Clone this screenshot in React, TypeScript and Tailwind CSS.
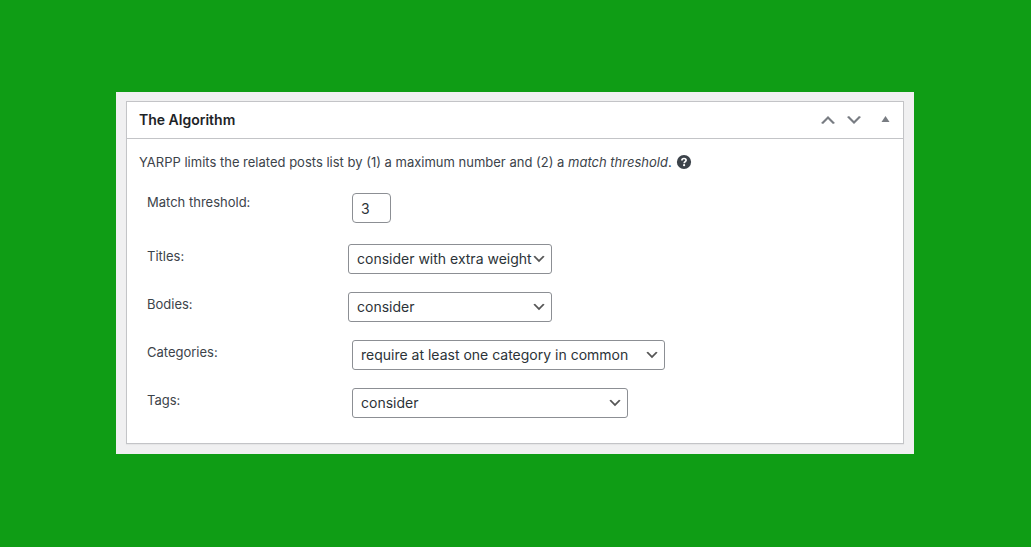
import { useState } from "react";
import type { ReactNode } from "react";

type RowProps = {
  id: string;
  label: string;
  tall?: boolean;
  inset?: boolean;
  children: ReactNode;
};

function Row({ id, label, tall, inset, children }: RowProps) {
  return (
    <div className={`flex items-start ${tall ? "pb-[21px]" : "pb-[18px]"}`}>
      <label
        htmlFor={id}
        className={`shrink-0 ${tall ? "" : "pt-[3px]"} ${inset ? "w-[205px]" : "w-[201px]"} leading-[18px]`}
      >
        {label}
      </label>
      {children}
    </div>
  );
}

type SelectProps = { id: string; width: string; options: string[] };

function Select({ id, width, options }: SelectProps) {
  return (
    <div className={`relative ${width}`}>
      <select
        id={id}
        className="block h-[30px] w-full appearance-none rounded-[3px] border border-[#8c8f94] bg-white pr-4 pl-2 text-sm text-[#2c3338]"
      >
        {options.map((option) => (
          <option key={option}>{option}</option>
        ))}
      </select>
      <svg
        viewBox="0 0 20 20"
        aria-hidden="true"
        className="pointer-events-none absolute top-[7px] right-[5px] size-4 fill-[#555]"
      >
        <path d="M5 6l5 5 5-5 2 1-7 7-7-7 2-1z" />
      </svg>
    </div>
  );
}

const weights = ["do not consider", "consider", "consider with extra weight"];

export default function App() {
  const [open, setOpen] = useState(true);

  return (
    <main className="min-h-screen bg-[#0f9d15] py-[92px] pr-[117px] pl-[116px] font-['Inter',sans-serif] text-[13px] leading-5 text-[#3c434a]">
      <div className="bg-[#f0f0f1] px-[10px] pt-[9px] pb-[10px]">
        <section className="border border-[#c3c4c7] bg-white shadow-[0_1px_1px_rgba(0,0,0,0.04)]">
          <header className="flex h-[37px] items-center border-b border-[#c3c4c7] pl-3">
            <h2 className="flex-1 text-sm font-semibold text-[#1d2327]">The Algorithm</h2>
            <div className="flex items-center pr-2 text-[#787c82]">
              <button type="button" aria-label="Move up" className="flex w-[26px] justify-center">
                <svg viewBox="0 0 20 20" className="size-5 fill-current">
                  <path d="M15 14l2-1-7-7-7 7 2 1 5-5z" />
                </svg>
              </button>
              <button type="button" aria-label="Move down" className="flex w-[26px] justify-center">
                <svg viewBox="0 0 20 20" className="size-5 fill-current">
                  <path d="M5 6l5 5 5-5 2 1-7 7-7-7z" />
                </svg>
              </button>
              <button
                type="button"
                aria-label="Toggle panel"
                aria-expanded={open}
                onClick={() => setOpen(!open)}
                className="ml-2 flex w-[20px] justify-center"
              >
                <svg viewBox="0 0 20 20" className="size-5 fill-current">
                  <path d="M10.5 6l4 6h-8z" />
                </svg>
              </button>
            </div>
          </header>
          {open && (
            <div className="px-3 pt-[13px] pb-[7px]">
              <p className="flex items-center">
                <span>
                  YARPP limits the related posts list by (1) a maximum number and (2) a{" "}
                  <em>match threshold</em>.
                </span>
                <button type="button" aria-label="Help" className="ml-1">
                  <svg viewBox="0 0 16 16" className="size-4">
                    <circle cx="8" cy="8" r="7.1" className="fill-[#3c434a]" />
                    <path
                      d="M5.9 6.4C5.9 5.1 6.8 4.5 8 4.5s2.1.7 2.1 1.8c0 1.3-1.9 1.4-1.9 2.9"
                      className="fill-none stroke-white stroke-[1.7]"
                    />
                    <circle cx="8.1" cy="11.2" r="1.1" className="fill-white" />
                  </svg>
                </button>
              </p>
              <form className="pt-[21px] pl-2">
                <Row id="threshold" label="Match threshold:" tall inset>
                  <input
                    id="threshold"
                    type="text"
                    defaultValue="3"
                    className="h-[30px] w-[39px] rounded-[4px] border border-[#8c8f94] bg-white px-2 text-sm text-[#2c3338]"
                  />
                </Row>
                <Row id="titles" label="Titles:">
                  <Select
                    id="titles"
                    width="w-[204px]"
                    options={[weights[2], weights[1], weights[0]]}
                  />
                </Row>
                <Row id="bodies" label="Bodies:">
                  <Select
                    id="bodies"
                    width="w-[204px]"
                    options={[weights[1], weights[0], weights[2]]}
                  />
                </Row>
                <Row id="categories" label="Categories:" inset>
                  <Select
                    id="categories"
                    width="w-[313px]"
                    options={["require at least one category in common", ...weights]}
                  />
                </Row>
                <Row id="tags" label="Tags:" inset>
                  <Select
                    id="tags"
                    width="w-[276px]"
                    options={[weights[1], weights[0], weights[2]]}
                  />
                </Row>
              </form>
            </div>
          )}
        </section>
      </div>
    </main>
  );
}
